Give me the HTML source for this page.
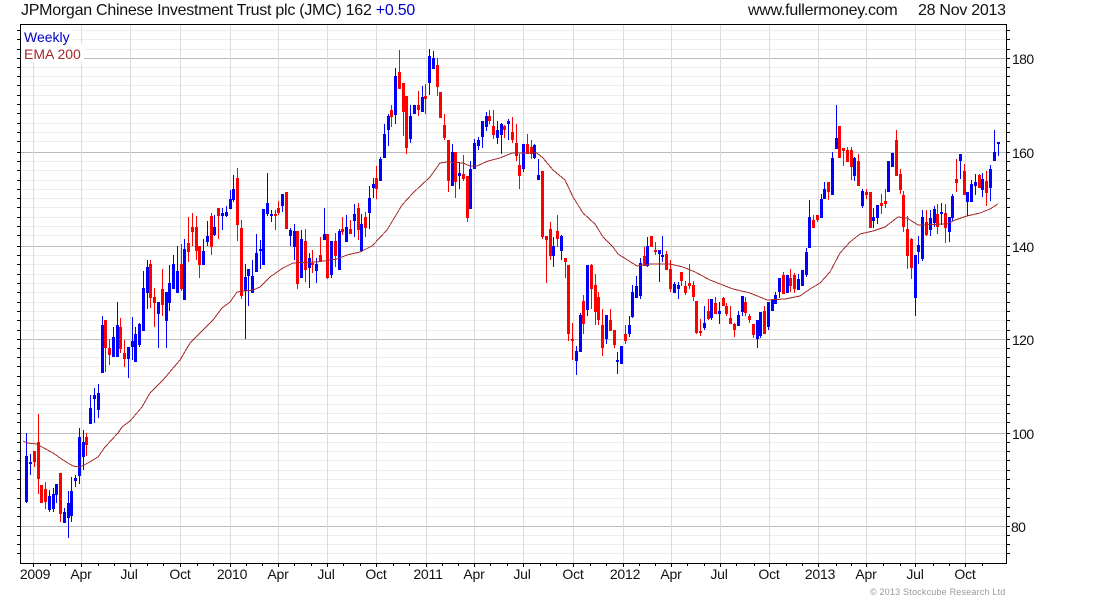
<!DOCTYPE html>
<html><head><meta charset="utf-8"><title>JMC chart</title>
<style>html,body{margin:0;padding:0;background:#fff;width:1100px;height:600px;overflow:hidden}svg{display:block}text{font-family:"Liberation Sans",Arial,sans-serif}</style></head>
<body>
<svg width="1100" height="600" viewBox="0 0 1100 600" xmlns="http://www.w3.org/2000/svg">
<g fill="none" shape-rendering="crispEdges">
<path stroke="#eeeeee" d="M20 30.5H1006M20 39.5H1006M20 49.5H1006M20 67.5H1006M20 76.5H1006M20 85.5H1006M20 95.5H1006M20 104.5H1006M20 113.5H1006M20 123.5H1006M20 132.5H1006M20 141.5H1006M20 161.5H1006M20 170.5H1006M20 180.5H1006M20 189.5H1006M20 198.5H1006M20 207.5H1006M20 217.5H1006M20 226.5H1006M20 235.5H1006M20 255.5H1006M20 264.5H1006M20 274.5H1006M20 283.5H1006M20 292.5H1006M20 302.5H1006M20 311.5H1006M20 320.5H1006M20 330.5H1006M20 348.5H1006M20 357.5H1006M20 366.5H1006M20 376.5H1006M20 385.5H1006M20 395.5H1006M20 404.5H1006M20 413.5H1006M20 422.5H1006M20 442.5H1006M20 451.5H1006M20 460.5H1006M20 470.5H1006M20 479.5H1006M20 488.5H1006M20 498.5H1006M20 507.5H1006M20 516.5H1006M20 535.5H1006M20 544.5H1006M20 553.5H1006"/>
<path stroke="#bbbbbb" d="M20 58.5H1006M20 152.5H1006M20 246.5H1006M20 339.5H1006M20 433.5H1006M20 526.5H1006"/>
<path stroke="#dddddd" d="M33.5 24V563M81.5 24V563M130.5 24V563M180.5 24V563M230.5 24V563M278.5 24V563M327.5 24V563M376.5 24V563M426.5 24V563M474.5 24V563M523.5 24V563M573.5 24V563M623.5 24V563M671.5 24V563M720.5 24V563M769.5 24V563M818.5 24V563M866.5 24V563M915.5 24V563M965.5 24V563"/>
<rect x="21" y="25" width="52" height="19" fill="#fff"/>
<rect x="21" y="44" width="63" height="18" fill="#fff"/>
<path stroke="#0000ff" d="M26.5 433V503M30.5 454V475M49.5 490V512M53.5 488V512M56.5 484V503M64.5 508V523M68.5 491V538M71.5 477V522M75.5 475V487M79.5 428V484M83.5 430V470M90.5 395V424M94.5 388V423M98.5 384V418M102.5 316V373M113.5 327V357M117.5 302V357M128.5 347V378M132.5 317V360M135.5 327V362M139.5 323V347M143.5 271V331M147.5 260V309M158.5 302V348M166.5 292V348M169.5 265V311M173.5 255V289M177.5 246V293M184.5 239V300M203.5 239V265M207.5 221V246M214.5 215V236M222.5 208V230M226.5 206V217M230.5 190V209M233.5 175V202M245.5 264V339M248.5 269V306M252.5 260V293M256.5 234V272M260.5 240V269M263.5 209V265M267.5 173V216M271.5 210V222M282.5 194V212M290.5 228V246M294.5 224V260M301.5 230V278M309.5 253V288M316.5 258V283M324.5 208V240M331.5 241V278M339.5 229V270M346.5 215V242M354.5 204V237M361.5 214V252M369.5 186V229M373.5 178V198M380.5 157V181M384.5 124V158M388.5 114V146M395.5 68V124M410.5 105V143M414.5 105V114M422.5 86V112M429.5 49V95M433.5 51V69M452.5 144V186M459.5 162V189M470.5 161V209M474.5 139V169M478.5 137V150M482.5 121V148M486.5 112V131M497.5 121V144M501.5 123V154M508.5 119V140M523.5 144V172M534.5 144V159M538.5 159V180M553.5 237V267M561.5 235V260M576.5 346V375M580.5 313V352M587.5 265V316M606.5 315V344M617.5 352V374M621.5 346V364M629.5 316V337M632.5 285V318M636.5 276V298M640.5 258V299M647.5 237V267M659.5 250V282M662.5 236V262M674.5 282V293M678.5 282V299M704.5 306V330M711.5 299V320M719.5 302V324M738.5 311V326M742.5 296V316M757.5 320V348M760.5 312V338M768.5 302V330M772.5 300V311M775.5 292V304M779.5 278V298M787.5 275V293M798.5 274V290M802.5 270V286M806.5 248V277M809.5 200V248M821.5 194V218M824.5 182V199M832.5 152V195M836.5 105V149M854.5 157V181M862.5 189V208M873.5 208V228M877.5 205V224M888.5 161V192M892.5 153V167M915.5 255V316M918.5 236V264M922.5 210V261M930.5 210V236M934.5 206V227M941.5 203V225M949.5 217V242M952.5 194V221M960.5 154V179M967.5 192V216M971.5 180V202M975.5 174V195M982.5 173V197M990.5 165V201M994.5 130V161M998.5 142V156"/>
<path stroke="#0000ff" stroke-width="3" d="M26.5 456V502M30.5 462V464M49.5 496V510M53.5 494V509M56.5 484V495M64.5 512V523M68.5 503V518M71.5 491V516M75.5 478V481M79.5 437V476M83.5 442V457M90.5 408V424M94.5 395V399M98.5 393V410M102.5 325V373M113.5 337V357M117.5 325V357M128.5 347V359M132.5 341V347M135.5 334V362M139.5 324V345M143.5 288V331M147.5 267V293M158.5 302V314M166.5 292V321M169.5 283V303M173.5 264V289M177.5 271V293M184.5 249V300M203.5 251V265M207.5 236V242M214.5 227V235M222.5 213V216M226.5 212V216M230.5 199V209M233.5 189V200M245.5 277V291M248.5 269V276M252.5 276V293M256.5 253V272M260.5 249V251M263.5 209V265M267.5 203V214M271.5 214V216M282.5 194V206M290.5 230V236M294.5 231V247M301.5 239V278M309.5 258V268M316.5 264V271M324.5 234V240M331.5 241V275M339.5 231V270M346.5 227V242M354.5 214V221M361.5 224V251M369.5 198V213M373.5 184V188M380.5 159V181M384.5 134V158M388.5 116V130M395.5 76V115M410.5 116V139M414.5 105V114M422.5 97V112M429.5 56V83M433.5 58V69M452.5 152V186M459.5 173V176M470.5 169V209M474.5 143V169M478.5 140V146M482.5 121V137M486.5 116V127M497.5 130V138M501.5 124V135M508.5 121V124M523.5 144V169M534.5 145V158M538.5 175V180M553.5 246V256M561.5 236V251M576.5 351V361M580.5 315V352M587.5 265V310M606.5 315V339M617.5 360V362M621.5 346V364M629.5 325V334M632.5 292V317M636.5 286V298M640.5 263V296M647.5 246V266M659.5 250V254M662.5 255V257M674.5 284V293M678.5 285V289M704.5 323V328M711.5 299V318M719.5 311V314M738.5 315V326M742.5 296V312M757.5 320V339M760.5 312V336M768.5 302V327M772.5 300V311M775.5 295V304M779.5 278V292M787.5 275V293M798.5 279V290M802.5 270V286M806.5 252V275M809.5 217V248M821.5 199V218M824.5 189V199M832.5 158V195M836.5 138V149M854.5 158V176M862.5 191V206M873.5 217V221M877.5 205V218M888.5 161V192M892.5 153V167M915.5 255V298M918.5 245V252M922.5 217V259M930.5 218V230M934.5 209V223M941.5 212V214M949.5 217V232M952.5 196V218M960.5 154V161M967.5 192V202M971.5 184V202M975.5 182V186M982.5 179V190M990.5 169V188M994.5 152V161M998.5 142V144"/>
<path stroke="#ff0000" d="M34.5 451V467M38.5 414V494M41.5 485V503M45.5 482V509M60.5 473V522M86.5 433V456M105.5 320V372M109.5 339V365M120.5 318V353M124.5 340V367M150.5 260V308M154.5 288V327M162.5 269V316M181.5 244V291M188.5 217V262M192.5 213V246M196.5 216V260M199.5 246V278M211.5 213V255M218.5 208V239M237.5 168V241M241.5 220V299M275.5 210V230M278.5 201V215M286.5 192V229M297.5 231V289M305.5 229V282M312.5 250V273M320.5 237V262M327.5 234V279M335.5 233V267M342.5 217V235M350.5 220V234M358.5 203V240M365.5 212V237M376.5 166V199M391.5 105V127M399.5 50V89M403.5 83V136M406.5 96V154M418.5 91V116M425.5 84V114M437.5 58V96M440.5 92V118M444.5 114V140M448.5 140V192M455.5 152V198M463.5 155V181M467.5 176V222M489.5 110V124M493.5 110V139M504.5 125V138M512.5 117V143M516.5 124V161M519.5 154V189M527.5 134V154M531.5 140V159M542.5 171V239M546.5 236V283M550.5 222V260M557.5 215V247M565.5 258V278M568.5 265V341M572.5 323V360M583.5 295V334M591.5 264V309M595.5 274V325M598.5 292V325M602.5 309V356M610.5 309V331M614.5 330V348M625.5 325V344M644.5 247V266M651.5 236V247M655.5 242V255M666.5 251V270M670.5 260V292M681.5 272V286M685.5 281V295M689.5 264V289M693.5 281V301M696.5 301V334M700.5 319V336M708.5 299V320M715.5 297V314M723.5 297V306M726.5 303V316M730.5 306V324M734.5 323V337M745.5 297V316M749.5 314V323M753.5 324V338M764.5 306V334M783.5 272V294M790.5 269V292M794.5 273V293M813.5 215V228M817.5 215V222M828.5 182V200M839.5 126V158M843.5 148V166M847.5 147V162M851.5 147V180M858.5 154V186M866.5 189V199M870.5 192V228M881.5 194V214M885.5 189V208M896.5 130V176M900.5 169V194M903.5 191V232M907.5 216V269M911.5 238V279M926.5 210V236M937.5 204V234M945.5 204V243M956.5 159V192M964.5 164V195M979.5 174V188M986.5 171V206"/>
<path stroke="#ff0000" stroke-width="3" d="M34.5 451V462M38.5 442V479M41.5 485V503M45.5 489V502M60.5 473V514M86.5 437V445M105.5 320V348M109.5 348V355M120.5 327V349M124.5 353V359M150.5 264V298M154.5 297V303M162.5 289V305M181.5 264V289M188.5 243V252M192.5 227V232M196.5 227V251M199.5 246V265M211.5 216V247M218.5 208V216M237.5 178V225M241.5 228V296M275.5 214V216M278.5 208V213M286.5 192V229M297.5 231V284M305.5 241V270M312.5 263V265M320.5 255V262M327.5 234V278M335.5 241V256M342.5 229V232M350.5 229V234M358.5 208V230M365.5 217V228M376.5 178V189M391.5 110V117M399.5 72V89M403.5 83V112M406.5 96V148M418.5 105V110M425.5 96V99M437.5 65V87M440.5 92V118M444.5 125V138M448.5 140V181M455.5 152V182M463.5 174V179M467.5 176V218M489.5 116V121M493.5 126V135M504.5 126V130M512.5 132V140M516.5 143V156M519.5 165V176M527.5 144V154M531.5 147V154M542.5 171V237M546.5 236V240M550.5 229V256M557.5 231V239M565.5 258V262M568.5 265V334M572.5 339V341M583.5 301V324M591.5 265V289M595.5 285V312M598.5 297V320M602.5 325V348M610.5 320V331M614.5 330V345M625.5 334V341M644.5 256V266M651.5 236V247M655.5 250V252M666.5 254V270M670.5 269V289M681.5 272V281M685.5 286V293M689.5 283V286M693.5 285V297M696.5 301V333M700.5 331V333M708.5 311V319M715.5 303V314M723.5 298V306M726.5 306V314M730.5 318V324M734.5 324V330M745.5 302V313M749.5 316V320M753.5 324V335M764.5 311V334M783.5 275V294M790.5 278V286M794.5 275V289M813.5 220V228M817.5 215V220M828.5 182V192M839.5 126V158M843.5 148V151M847.5 150V162M851.5 150V167M858.5 161V186M866.5 192V195M870.5 192V228M881.5 203V206M885.5 201V204M896.5 140V176M900.5 174V190M903.5 195V227M907.5 229V256M911.5 239V268M926.5 222V235M937.5 214V227M945.5 213V228M956.5 179V183M964.5 171V195M979.5 175V188M986.5 181V193"/>
<polyline stroke="#a52a2a" points="23,441 27,443 37,444 42,447 53,453 63,460 73,466 80,467 88,463 98,457 105,447 118,433 122,427 130,421 142,407 150,393 163,380 180,360 190,343 200,333 213,320 222,308 230,302 237,292 253,290 260,287 270,277 283,268 293,263 317,262 337,259 347,255 360,252 372,246 387,230 393,220 402,205 413,193 430,177 440,163 447,162 463,163 470,166 477,166 488,161 500,158 512,153 537,153 543,158 553,170 565,180 573,197 583,213 595,224 603,237 613,247 618,254 637,266 650,264 670,264 683,267 695,272 710,280 733,289 750,293 767,300 785,299 800,296 810,289 820,283 830,272 840,253 850,242 860,234 873,231 885,227 898,217 907,218 918,225 947,224 955,220 967,216 980,213 990,209 998,204"/>
<path stroke="#000" d="M17 30.5H20M17 39.5H20M17 49.5H20M17 58.5H20M17 67.5H20M17 76.5H20M17 85.5H20M17 95.5H20M17 104.5H20M17 113.5H20M17 123.5H20M17 132.5H20M17 141.5H20M17 152.5H20M17 161.5H20M17 170.5H20M17 180.5H20M17 189.5H20M17 198.5H20M17 207.5H20M17 217.5H20M17 226.5H20M17 235.5H20M17 246.5H20M17 255.5H20M17 264.5H20M17 274.5H20M17 283.5H20M17 292.5H20M17 302.5H20M17 311.5H20M17 320.5H20M17 330.5H20M17 339.5H20M17 348.5H20M17 357.5H20M17 366.5H20M17 376.5H20M17 385.5H20M17 395.5H20M17 404.5H20M17 413.5H20M17 422.5H20M17 433.5H20M17 442.5H20M17 451.5H20M17 460.5H20M17 470.5H20M17 479.5H20M17 488.5H20M17 498.5H20M17 507.5H20M17 516.5H20M17 526.5H20M17 535.5H20M17 544.5H20M17 553.5H20"/>
<path stroke="#000" d="M1007 30.5H1010M1007 39.5H1010M1007 49.5H1010M1007 58.5H1010M1007 67.5H1010M1007 76.5H1010M1007 85.5H1010M1007 95.5H1010M1007 104.5H1010M1007 113.5H1010M1007 123.5H1010M1007 132.5H1010M1007 141.5H1010M1007 152.5H1010M1007 161.5H1010M1007 170.5H1010M1007 180.5H1010M1007 189.5H1010M1007 198.5H1010M1007 207.5H1010M1007 217.5H1010M1007 226.5H1010M1007 235.5H1010M1007 246.5H1010M1007 255.5H1010M1007 264.5H1010M1007 274.5H1010M1007 283.5H1010M1007 292.5H1010M1007 302.5H1010M1007 311.5H1010M1007 320.5H1010M1007 330.5H1010M1007 339.5H1010M1007 348.5H1010M1007 357.5H1010M1007 366.5H1010M1007 376.5H1010M1007 385.5H1010M1007 395.5H1010M1007 404.5H1010M1007 413.5H1010M1007 422.5H1010M1007 433.5H1010M1007 442.5H1010M1007 451.5H1010M1007 460.5H1010M1007 470.5H1010M1007 479.5H1010M1007 488.5H1010M1007 498.5H1010M1007 507.5H1010M1007 516.5H1010M1007 526.5H1010M1007 535.5H1010M1007 544.5H1010M1007 553.5H1010"/>
<path stroke="#000" d="M33.5 564V567M50.5 564V566M65.5 564V566M81.5 564V567M98.5 564V566M114.5 564V566M130.5 564V567M147.5 564V566M163.5 564V566M180.5 564V567M197.5 564V566M213.5 564V566M230.5 564V567M246.5 564V566M262.5 564V566M278.5 564V567M294.5 564V566M311.5 564V566M327.5 564V567M343.5 564V566M360.5 564V566M376.5 564V567M393.5 564V566M409.5 564V566M426.5 564V567M442.5 564V566M458.5 564V566M474.5 564V567M490.5 564V566M507.5 564V566M523.5 564V567M540.5 564V566M556.5 564V566M573.5 564V567M590.5 564V566M606.5 564V566M623.5 564V567M639.5 564V566M655.5 564V566M671.5 564V567M687.5 564V566M704.5 564V566M720.5 564V567M736.5 564V566M754.5 564V566M769.5 564V567M786.5 564V566M802.5 564V566M818.5 564V567M836.5 564V566M851.5 564V566M866.5 564V567M883.5 564V566M900.5 564V566M915.5 564V567M933.5 564V566M949.5 564V566M965.5 564V567M982.5 564V566"/>
<rect x="20.5" y="24.5" width="986" height="539" stroke="#000"/>
</g>
<text x="21" y="15" font-size="16" fill="#111" letter-spacing="-.26">JPMorgan Chinese Investment Trust plc (JMC) 162 <tspan fill="#0000cc">+0.50</tspan></text>
<text x="748" y="15" font-size="16" fill="#111" letter-spacing="-.26">www.fullermoney.com</text>
<text x="918" y="15" font-size="16" fill="#111" letter-spacing="-.27">28 Nov 2013</text>
<text x="24" y="42" font-size="14" fill="#0000cc">Weekly</text>
<text x="24" y="59" font-size="14" fill="#a52a2a">EMA 200</text>
<g font-size="14" fill="#111" letter-spacing="-.6">
<text x="1012" y="64">180</text><text x="1012" y="158">160</text><text x="1012" y="252">140</text><text x="1012" y="345">120</text><text x="1012" y="439">100</text><text x="1011" y="532">80</text>
</g>
<g font-size="14" fill="#111" text-anchor="middle" letter-spacing="-.2">
<text x="35" y="579">2009</text><text x="81" y="579">Apr</text><text x="129" y="579">Jul</text><text x="180" y="579">Oct</text><text x="232" y="579">2010</text><text x="278" y="579">Apr</text><text x="326" y="579">Jul</text><text x="376" y="579">Oct</text><text x="428" y="579">2011</text><text x="474" y="579">Apr</text><text x="522" y="579">Jul</text><text x="573" y="579">Oct</text><text x="625" y="579">2012</text><text x="671" y="579">Apr</text><text x="719" y="579">Jul</text><text x="769" y="579">Oct</text><text x="820" y="579">2013</text><text x="866" y="579">Apr</text><text x="915" y="579">Jul</text><text x="965" y="579">Oct</text>
</g>
<text x="870" y="595" font-size="9" fill="#999" letter-spacing=".2">© 2013 Stockcube Research Ltd</text>
</svg>
</body></html>
